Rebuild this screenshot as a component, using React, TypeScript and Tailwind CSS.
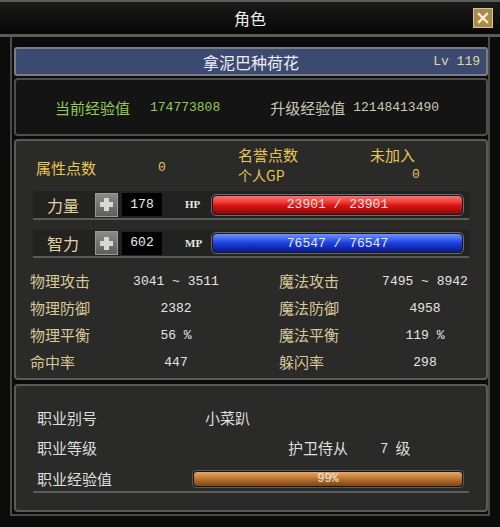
import React from "react";

const CJK = "font-['Noto_Sans_CJK_SC','Noto_Sans',sans-serif]";
const MONO = "font-['Liberation_Mono',monospace]";

function Plus() {
  return (
    <div className="w-[23px] h-[24px] bg-gradient-to-b from-[#8a8a88] to-[#5e5e5c] border border-[#9a9a98] flex items-center justify-center">
      <svg width="15" height="15" viewBox="0 0 15 15">
        <rect x="5" y="1" width="5" height="13" fill="#d8d8d8" />
        <rect x="1" y="5" width="13" height="5" fill="#d8d8d8" />
      </svg>
    </div>
  );
}

function Bar({ from, mid, to, text, textColor }: { from: string; mid: string; to: string; text: string; textColor: string }) {
  return (
    <div className="flex-1 h-[22px] rounded-[5px] border border-[#6a6a6a] bg-[#1a1a1a] p-[1px] flex">
      <div className={`flex-1 rounded-[4px] bg-gradient-to-b ${from} ${mid} ${to} flex items-center justify-center`}>
        <span className={`${MONO} text-[13px] leading-none ${textColor}`}>{text}</span>
      </div>
    </div>
  );
}

function StatRow({ label, value }: { label: string; value: string }) {
  return (
    <div className="flex items-center h-[27px]">
      <span className={`${CJK} text-[15px] text-[#d8c898] w-[101px]`}>{label}</span>
      <span className={`${MONO} text-[13px] text-[#e4e4e4] w-[90px] text-center whitespace-pre`}>{value}</span>
    </div>
  );
}

export default function App() {
  return (
    <div className="w-[500px] h-[527px] bg-[#0b0b0b] overflow-hidden flex flex-col">
      {/* Title bar */}
      <div className="h-[37px] shrink-0 border-t-2 border-b-[3px] border-[#5e5d55] bg-gradient-to-b from-[#1a1a1a] to-[#080808] grid grid-cols-[1fr_auto_1fr] items-center">
        <div />
        <span className={`${CJK} text-[16px] text-[#eeeeee]`}>角色</span>
        <div className="flex justify-end pr-[7px]">
          <div className="w-[20px] h-[20px] bg-[#a88a4c] border border-[#d8c48c] flex items-center justify-center">
            <svg width="12" height="12" viewBox="0 0 12 12">
              <path d="M2 2 L10 10 M10 2 L2 10" stroke="#f4ecd0" strokeWidth="2.4" strokeLinecap="square" />
            </svg>
          </div>
        </div>
      </div>

      {/* Body frame */}
      <div className="flex-1 mx-[10px] mb-[11px] border-x-2 border-b-2 border-[#4a4a46] pl-[2px] pt-[10px] pb-[2px] flex flex-col">
        {/* Name bar */}
        <div className="h-[29px] shrink-0 border-2 border-[#7a7c84] rounded-[3px] bg-[#3c4a72] grid grid-cols-[1fr_auto_1fr] items-center">
          <div />
          <span className={`${CJK} text-[16px] text-[#ececf4]`}>拿泥巴种荷花</span>
          <div className="flex justify-end pr-[6px]">
            <span className={`${MONO} text-[13px] text-[#dcd89c] whitespace-pre`}>Lv 119</span>
          </div>
        </div>

        {/* Exp panel */}
        <div className="mt-[2px] h-[58px] shrink-0 border-2 border-[#4e4e4c] rounded-[4px] bg-[#141414] flex items-center pl-[39px] pt-[2px]">
          <span className={`${CJK} text-[15px] text-[#92cc52]`}>当前经验值</span>
          <span className={`${MONO} text-[13px] text-[#92cc52] ml-[20px]`}>174773808</span>
          <span className={`${CJK} text-[15px] text-[#cacab4] ml-[50px]`}>升级经验值</span>
          <span className={`${MONO} text-[13px] text-[#cacab4] ml-[8px]`}>12148413490</span>
        </div>

        {/* Attributes panel */}
        <div className="mt-[3px] h-[241px] shrink-0 border-2 border-[#5a5a56] rounded-[4px] bg-[#2a2a29] flex flex-col px-[17px]">
          <div className="h-[48px] flex items-center">
            <span className={`${CJK} text-[15px] text-[#e8c656] w-[125px] pl-[3px] pt-[6px]`}>属性点数</span>
            <span className={`${MONO} text-[13px] text-[#e8c656] w-[80px] pt-[6px]`}>0</span>
            <div className="flex flex-col leading-[20px]">
              <div className="flex">
                <span className={`${CJK} text-[15px] text-[#e8c656] w-[132px]`}>名誉点数</span>
                <span className={`${CJK} text-[15px] text-[#e8c656]`}>未加入</span>
              </div>
              <div className="flex items-center">
                <span className={`${CJK} text-[14px] text-[#e8c656] w-[174px]`}>个人GP</span>
                <span className={`${MONO} text-[13px] text-[#e8c656]`}>0</span>
              </div>
            </div>
          </div>

          {/* 力量 */}
          <div className="mt-[2px] h-[29px] border-b-2 border-[#5a5a58] bg-[#222221] flex items-center pl-[14px] pr-[5px]">
            <span className={`${CJK} text-[16px] text-[#e2d2a2] w-[48px]`}>力量</span>
            <Plus />
            <div className="ml-[4px] w-[40px] h-[23px] bg-black flex items-center justify-center">
              <span className={`${MONO} text-[13px] text-[#eeeeee]`}>178</span>
            </div>
            <span className="font-['Liberation_Serif',serif] font-bold text-[11px] text-[#e8e8e8] ml-[23px] w-[26px]">HP</span>
            <Bar from="from-[#ff7070]" mid="via-[#e01616]" to="to-[#8a0606]" text="23901 / 23901" textColor="text-[#ffe0e0]" />
          </div>

          {/* 智力 */}
          <div className="mt-[10px] h-[28px] border-b-2 border-[#5a5a58] bg-[#222221] flex items-center pl-[14px] pr-[5px]">
            <span className={`${CJK} text-[16px] text-[#e2d2a2] w-[48px]`}>智力</span>
            <Plus />
            <div className="ml-[4px] w-[40px] h-[23px] bg-black flex items-center justify-center">
              <span className={`${MONO} text-[13px] text-[#eeeeee]`}>602</span>
            </div>
            <span className="font-['Liberation_Serif',serif] font-bold text-[11px] text-[#e8e8e8] ml-[23px] w-[26px]">MP</span>
            <Bar from="from-[#7090ff]" mid="via-[#1c3ee0]" to="to-[#0a1a88]" text="76547 / 76547" textColor="text-[#e4e8ff]" />
          </div>

          {/* Stats */}
          <div className="mt-[10px] grid grid-cols-[249px_1fr] -ml-[3px]">
            <div className="flex flex-col">
              <StatRow label="物理攻击" value="3041 ~ 3511" />
              <StatRow label="物理防御" value="2382" />
              <StatRow label="物理平衡" value="56 %" />
              <StatRow label="命中率" value="447" />
            </div>
            <div className="flex flex-col">
              <StatRow label="魔法攻击" value="7495 ~ 8942" />
              <StatRow label="魔法防御" value="4958" />
              <StatRow label="魔法平衡" value="119 %" />
              <StatRow label="躲闪率" value="298" />
            </div>
          </div>
        </div>

        {/* Job panel */}
        <div className="mt-[4px] flex-1 border-2 border-[#5a5a56] rounded-[4px] bg-[#2a2a29] flex flex-col px-[17px] pt-[17px]">
          <div className="h-[30px] flex items-center pl-[4px]">
            <span className={`${CJK} text-[15px] text-[#dedede] w-[168px]`}>职业别号</span>
            <span className={`${CJK} text-[15px] text-[#dedede]`}>小菜趴</span>
          </div>
          <div className="h-[30px] flex items-center pl-[4px]">
            <span className={`${CJK} text-[15px] text-[#dedede] w-[251px]`}>职业等级</span>
            <span className={`${CJK} text-[15px] text-[#dedede] w-[92px]`}>护卫侍从</span>
            <span className={`${MONO} text-[14px] leading-[20px] text-[#dedede] pt-[2px]`}>7</span>
            <span className={`${CJK} text-[15px] text-[#dedede] ml-[7px]`}>级</span>
          </div>
          <div className="mt-[4px] h-[26px] border-b-2 border-[#5a5a58] flex items-center pl-[4px] pr-[5px]">
            <span className={`${CJK} text-[15px] text-[#dedede] w-[155px]`}>职业经验值</span>
            <div className="flex-1 h-[18px] rounded-[4px] border border-[#5a5a5a] bg-[#151515] p-[1px] flex">
              <div className="flex-1 rounded-[3px] bg-gradient-to-b from-[#e6aa66] via-[#b8722e] to-[#7e4516] flex items-center justify-center">
                <span className={`${MONO} text-[12px] leading-none text-[#f0e8dc]`}>99%</span>
              </div>
            </div>
          </div>
        </div>
      </div>
    </div>
  );
}
